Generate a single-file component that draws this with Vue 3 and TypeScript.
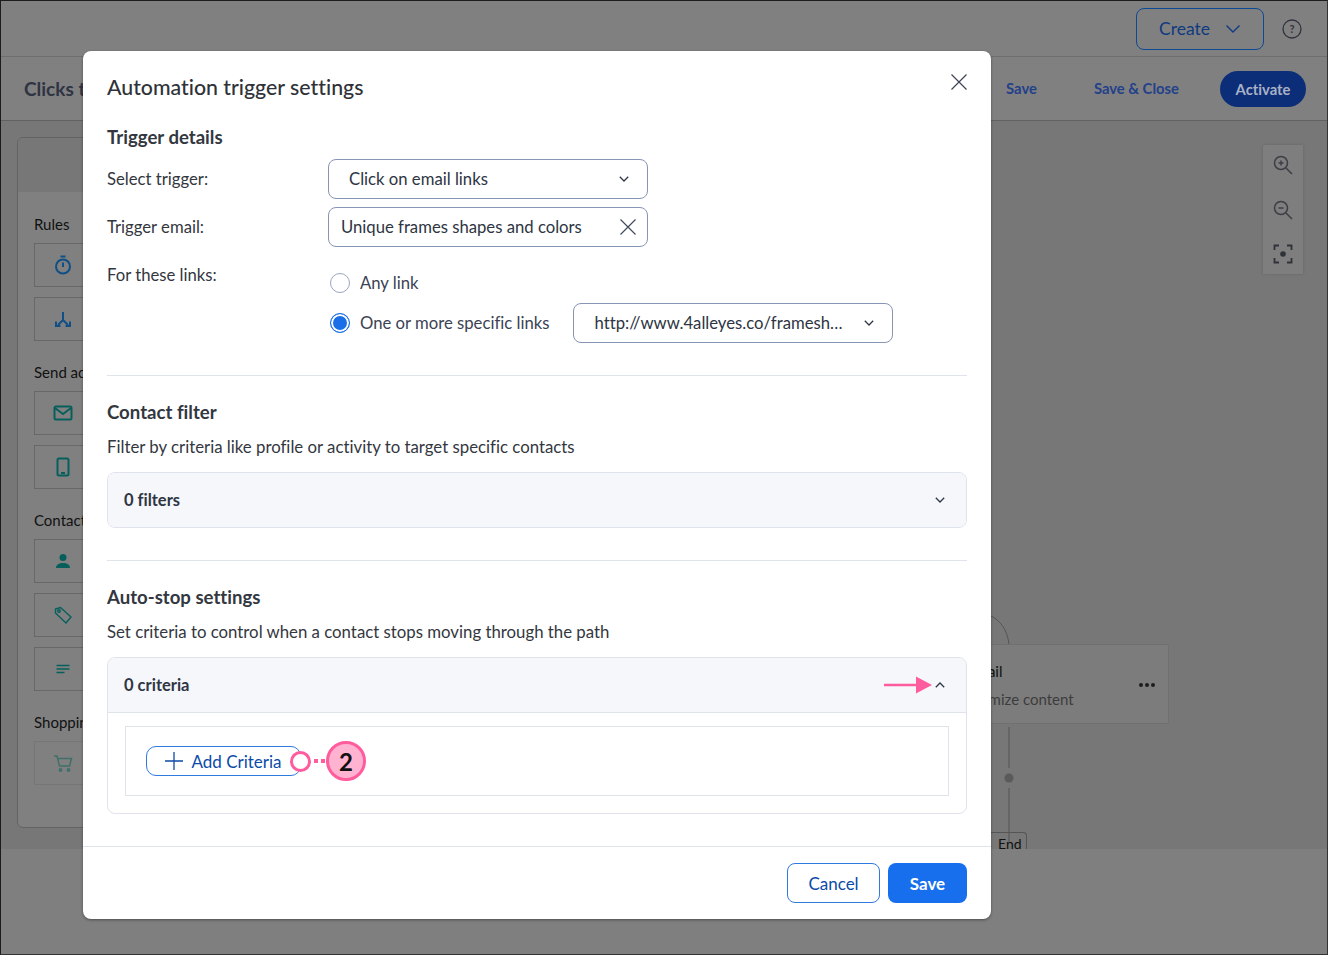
<script setup lang="ts">
interface Tile { icon: string; disabled?: boolean }
interface Group { title: string; tiles: Tile[] }
const groups: Group[] = [
  { title: 'Rules', tiles: [{ icon: 'timer' }, { icon: 'split' }] },
  { title: 'Send actions', tiles: [{ icon: 'mail' }, { icon: 'phone' }] },
  { title: 'Contact actions', tiles: [{ icon: 'person' }, { icon: 'tag' }, { icon: 'lines' }] },
  { title: 'Shopping', tiles: [{ icon: 'cart', disabled: true }] },
]
</script>

<template>
  <div class="page">
    <header class="topbar">
      <button class="create">Create
        <svg width="16" height="10" viewBox="0 0 16 10"><path d="M1.5 1.5 8 8l6.5-6.5" fill="none" stroke="currentColor" stroke-width="1.4"/></svg>
      </button>
      <svg class="help" width="20" height="20" viewBox="0 0 20 20"><circle cx="10" cy="10" r="9" fill="none" stroke="#2f333d" stroke-width="1.3"/><text x="10" y="14" text-anchor="middle" font-size="11" font-weight="700" fill="#2f333d" font-family="Lato, sans-serif">?</text></svg>
    </header>
    <div class="toolbar">
      <h1>Clicks to frames</h1>
      <div class="tool-actions">
        <span class="tool-link save-link">Save</span>
        <span class="tool-link">Save &amp; Close</span>
        <span class="activate">Activate</span>
      </div>
    </div>
    <div class="workspace">
      <aside class="sidebar">
        <div class="side-top"></div>
        <div class="side-body">
          <section v-for="g in groups" :key="g.title" class="group">
            <h3>{{ g.title }}</h3>
            <div v-for="t in g.tiles" :key="t.icon" class="tile" :class="{ off: t.disabled }">
              <svg width="24" height="24" viewBox="0 0 24 24" fill="none" stroke-width="2">
                <g v-if="t.icon === 'timer'" stroke="#0f4f86"><circle cx="12" cy="13.5" r="7"/><path d="M9.5 3.5h5M12 9.5v4.5"/></g>
                <g v-else-if="t.icon === 'split'" stroke="#0f4f86"><path d="M12 5v8M12 13l-5 5M12 13l5 5M5 14.5V19h4.500M19 14.500V19h-4.500"/></g>
                <g v-else-if="t.icon === 'mail'" stroke="#075f5c"><rect x="3.500" y="5.500" width="17" height="13" rx="1.500"/><path d="M4 7l8 6 8-6"/></g>
                <g v-else-if="t.icon === 'phone'" stroke="#075f5c"><rect x="6.500" y="3.500" width="11" height="17" rx="1.500"/><path d="M10 18h4"/></g>
                <g v-else-if="t.icon === 'person'" fill="#075f5c"><circle cx="12" cy="8.500" r="3.500"/><path d="M5 19c0-3.500 3-5 7-5s7 1.500 7 5z"/></g>
                <g v-else-if="t.icon === 'tag'" stroke="#075f5c" stroke-width="1.400"><path d="M4.500 6 9.500 4.500 20 14l-5 6L4.500 10z"/><circle cx="8" cy="8" r="1.300"/></g>
                <g v-else-if="t.icon === 'lines'" stroke="#075f5c" stroke-width="1.300"><path d="M5.500 8.500h13M5.500 12h13M5.500 15.500h8"/></g>
                <g v-else stroke="#3f6f69" stroke-width="1.500"><path d="M3 5h3l2.500 10h10L20.500 7.500H7"/><circle cx="9.500" cy="19" r="1.200"/><circle cx="17.500" cy="19" r="1.200"/></g>
              </svg>
            </div>
          </section>
        </div>
      </aside>
      <div class="zoomer">
        <svg width="20" height="20" viewBox="0 0 20 20" fill="none" stroke="#3c3f45" stroke-width="1.500"><circle cx="8" cy="8" r="6.500"/><path d="M13 13l6 6M8 5.500v5M5.500 8h5"/></svg>
        <svg width="20" height="20" viewBox="0 0 20 20" fill="none" stroke="#3c3f45" stroke-width="1.500"><circle cx="8" cy="8" r="6.500"/><path d="M13 13l6 6M5.500 8h5"/></svg>
        <svg width="20" height="20" viewBox="0 0 20 20" fill="none" stroke="#2f3238" stroke-width="1.800"><path d="M1.500 6V1.500H6M14 1.500h4.500V6M18.500 14v4.500H14M6 18.500H1.500V14"/><circle cx="10" cy="10" r="2.800" fill="#2f3238" stroke="none"/></svg>
      </div>
      <div class="node">
        <div class="node-title">Send email</div>
        <div class="node-sub">Customize content</div>
        <span class="dots"><i></i><i></i><i></i></span>
      </div>
      <svg class="wires" width="60" height="230" viewBox="0 0 60 230" fill="none" stroke="#555">
        <path d="M0 0c8 4 16 12 18 28"/><path d="M18 111v41M18 172v54"/><circle cx="18" cy="162" r="4.500" fill="#5a5a5a" stroke="none"/>
      </svg>
      <div class="end">End</div>
    </div>
    <div class="bottom-strip"></div>

    <div class="modal">
      <div class="modal-body">
        <h2 class="modal-title">Automation trigger settings</h2>
        <svg class="close" width="16" height="16" viewBox="0 0 16 16"><path d="M.5.5l15 15M15.500.5l-15 15" stroke="#3c4353" stroke-width="1.200" fill="none"/></svg>

        <h3 class="section first">Trigger details</h3>
        <div class="form-grid">
          <label>Select trigger:</label>
          <div class="select pad-wide">Click on email links
            <svg class="chev" width="10" height="6" viewBox="0 0 10 6"><path d="M.8.8 5 5 9.200.8" fill="none" stroke="#2f3747" stroke-width="1.300"/></svg>
          </div>
          <label>Trigger email:</label>
          <div class="select pad-narrow">Unique frames shapes and colors
            <svg width="18" height="18" viewBox="0 0 18 18"><path d="M1.500 1.500l15 15M16.500 1.500l-15 15" stroke="#3f4a60" stroke-width="1.200" fill="none"/></svg>
          </div>
          <label class="links-label">For these links:</label>
          <div class="radios">
            <div class="radio-row"><span class="radio"></span>Any link</div>
            <div class="radio-row second"><span class="radio on"></span><span>One or more specific links</span>
              <div class="select url">http://www.4alleyes.co/framesh…
                <svg class="chev" width="10" height="6" viewBox="0 0 10 6"><path d="M.8.8 5 5 9.200.8" fill="none" stroke="#2f3747" stroke-width="1.300"/></svg>
              </div>
            </div>
          </div>
        </div>

        <hr class="rule r1" />
        <h3 class="section">Contact filter</h3>
        <p class="desc">Filter by criteria like profile or activity to target specific contacts</p>
        <div class="accordion">
          <div class="acc-head"><strong>0 filters</strong>
            <svg class="chev" width="10" height="6" viewBox="0 0 10 6"><path d="M.8.8 5 5 9.200.8" fill="none" stroke="#2f3747" stroke-width="1.300"/></svg>
          </div>
        </div>

        <hr class="rule r2" />
        <h3 class="section">Auto-stop settings</h3>
        <p class="desc">Set criteria to control when a contact stops moving through the path</p>
        <div class="accordion">
          <div class="acc-head open"><strong>0 criteria</strong>
            <svg class="chev" width="10" height="6" viewBox="0 0 10 6"><path d="M.8 5.200 5 1l4.200 4.200" fill="none" stroke="#2f3747" stroke-width="1.300"/></svg>
          </div>
          <div class="acc-body">
            <div class="inner">
              <button class="add"><svg width="18" height="18" viewBox="0 0 18 18"><path d="M9 0v18M0 9h18" stroke="#0b4aa8" stroke-width="1.300"/></svg>Add Criteria</button>
            </div>
          </div>
        </div>
      </div>
      <footer class="modal-foot">
        <button class="btn cancel">Cancel</button>
        <button class="btn primary">Save</button>
      </footer>
    </div>

    <svg class="arrow" width="48" height="18" viewBox="0 0 48 18"><path d="M0 7.800h32v-7.300L48 9 32 17.500v-7.300H0z" fill="#ff5c9e"/></svg>
    <div class="callout">
      <span class="ring"></span>
      <span class="dot-line"><i></i><i></i></span>
      <span class="badge">2</span>
    </div>
  </div>
</template>

<style>
html, body { margin: 0; padding: 0; }
</style>

<style scoped>
* { box-sizing: border-box; }
.page {
  position: relative; width: 1328px; height: 955px; overflow: hidden;
  background: #7f7f7f; border: 1px solid #1c1c1c; border-right-color: #333; border-bottom-color: #333;
  font-family: Lato, "Noto Sans", sans-serif; color: #333a48; font-variant-ligatures: none;
}
.topbar {
  height: 56px; display: flex; align-items: center; justify-content: flex-end;
  padding: 0 25px 0 0; gap: 18px; border-bottom: 1px solid #6e6e6e; background: #808080;
}
.create {
  width: 128px; height: 42px; border: 1px solid #0d4a96; border-radius: 8px; background: transparent;
  color: #0f3a80; font: 400 17.500px Lato, sans-serif; display: flex; align-items: center; justify-content: center; gap: 15px;
}
.help { flex: none; }
.toolbar {
  height: 64px; display: flex; align-items: center; justify-content: space-between;
  padding: 0 21px 0 23px; background: #808080; border-bottom: 1px solid #616161;
}
.toolbar h1 { margin: 0; font-size: 19px; font-weight: 700; color: #2f3442; white-space: nowrap; }
.tool-actions { display: flex; align-items: center; }
.tool-link { color: #23408a; font-size: 14.800px; font-weight: 700; margin: -1px 41px 0 0; }
.save-link { margin-right: 57px; }
.activate {
  width: 86px; height: 36px; border-radius: 18px; background: #0c2d78; color: #a9b1c6;
  font-size: 14.800px; font-weight: 700; display: flex; align-items: center; justify-content: center;
}
.workspace { position: relative; height: 728px; background: #777; }
.sidebar {
  position: absolute; left: 16px; top: 16px; width: 300px; height: 691px;
  border: 1px solid #636363; border-radius: 6px; overflow: hidden; background: #808080;
}
.side-top { height: 54px; background: #777; }
.side-body { padding: 22px 16px; }
.group h3 { margin: 0 0 9px; font-size: 15px; font-weight: 400; color: #111; line-height: 20px; white-space: nowrap; }
.group { margin-bottom: 21px; }
.tile {
  width: 200px; height: 44px; border: 1px solid #686868; display: flex; align-items: center;
  padding-left: 16px; margin-bottom: 10px;
}
.tile.off { border-color: #767676; }
.zoomer {
  position: absolute; left: 1262px; top: 24px; width: 40px; height: 129px; background: #7e7e7e;
  display: flex; flex-direction: column; align-items: center; justify-content: space-between; padding: 10px 0;
  box-shadow: 0 0 3px rgba(0,0,0,.15);
}
.node {
  position: absolute; left: 900px; top: 524px; width: 267px; height: 78px; background: #7c7c7c; padding: 16px 0 0 70px;
  box-shadow: 0 0 1px rgba(0,0,0,.3);
}
.node-title { font-size: 15px; color: #111; line-height: 20px; margin-left: -40px; }
.node-sub { font-size: 15px; color: #3c3c3c; line-height: 20px; margin-top: 8px; margin-left: -21px; }
.dots { position: absolute; right: 13px; top: 38px; display: flex; gap: 2px; }
.dots i { width: 4px; height: 4px; border-radius: 50%; background: #1d1d1d; display: block; }
.wires { position: absolute; left: 990px; top: 495px; }
.end {
  position: absolute; left: 970px; top: 711px; width: 56px; height: 20px; padding-left: 26px; border: 1px solid #555; border-bottom: 0;
  border-radius: 4px 4px 0 0; font-size: 14px; line-height: 22px; color: #111;
}
.bottom-strip { position: absolute; left: 0; right: 0; top: 848px; bottom: 0; background: #7f7f7f; }

.modal {
  position: absolute; left: 82px; top: 50px; width: 908px; height: 868px; background: #fff; border-radius: 8px;
  display: flex; flex-direction: column; box-shadow: 0 1px 3px rgba(0,0,0,.4);
}
.modal-body { position: relative; flex: 1; padding: 23px 24px 0; }
.modal-title { margin: 0; font-size: 21.300px; line-height: 27px; font-weight: 500; color: #2f3238; }
.close { position: absolute; right: 24px; top: 23px; }
.section { margin: 0; font-size: 18.600px; line-height: 24px; font-weight: 700; color: #333740; }
.section.first { margin-top: 24px; }
.form-grid {
  display: grid; grid-template-columns: 221px 1fr; row-gap: 8px; margin-top: 10px; align-items: center;
}
label { font-size: 16.700px; color: #333740; }
.select {
  width: 320px; height: 40px; border: 1px solid #8694b5; border-radius: 8px; display: flex; align-items: center; justify-content: space-between;
  font-size: 16.700px; color: #2e3543; background: #fff; white-space: nowrap;
}
.links-label { align-self: start; margin-top: 10px; }
.pad-wide { padding: 0 18px 0 20px; }
.pad-narrow { padding: 0 10px 0 12px; }
.radio-row { display: flex; align-items: center; height: 40px; font-size: 16.700px; color: #3b4355; margin-top: 8px; }
.radio-row.second { margin-top: 0; }
.radio {
  width: 20px; height: 20px; border-radius: 50%; border: 1px solid #9aa5bf; margin: 0 10px 0 2px; flex: none; background: #fff;
}
.radio.on { border: 1px solid #1a6fe8; background: #1a6fe8; box-shadow: inset 0 0 0 2px #fff; }
.url { margin-left: 24px; padding: 0 18px 0 20px; }
.rule { border: 0; border-top: 1px solid #dfe3ec; margin: 0; }
.r1 { margin-top: 32px; }
.r2 { margin-top: 32px; }
.rule + .section { margin-top: 24px; }
.desc { margin: 11px 0 0; font-size: 16.800px; line-height: 24px; color: #333740; height: 24px; }
.accordion { margin-top: 13px; border: 1px solid #dfe3ec; border-radius: 8px; overflow: hidden; }
.acc-head {
  height: 54px; background: #f6f7fb; display: flex; align-items: center; justify-content: space-between; padding: 0 21px 0 16px;
  font-size: 16.500px; color: #2e3543;
}
.acc-head.open { height: 55px; border-bottom: 1px solid #dfe3ec; }
.acc-body { padding: 13px 17px 17px; }
.inner { height: 70px; border: 1px solid #dfe3ec; padding: 19px 20px; }
.add {
  width: 155px; height: 30px; border: 1px solid #2f7ae0; border-radius: 10px; background: #fff; color: #0b4aa8;
  font: 400 17px Lato, sans-serif; display: flex; align-items: center; justify-content: center; gap: 8px; padding: 0;
}
.modal-foot {
  height: 73px; border-top: 1px solid #dfe3ec; display: flex; justify-content: flex-end; align-items: center; gap: 8px; padding: 0 24px;
}
.btn { height: 40px; border-radius: 8px; font: 400 17px Lato, sans-serif; cursor: pointer; }
.cancel { width: 93px; background: #fff; border: 1px solid #2f7ae0; color: #0b4aa8; }
.primary { width: 79px; background: #176fed; border: 0; color: #fff; font-weight: 700; }
.create, .add, .btn { font-variant-ligatures: none; }

.arrow { position: absolute; left: 883px; top: 675px; }
.callout { position: absolute; left: 289px; top: 740px; display: flex; align-items: center; height: 40px; }
.ring { width: 21px; height: 21px; border: 3px solid #ff5c9e; border-radius: 50%; background: #fff; }
.dot-line { display: flex; gap: 3px; margin: 0 1px 0 3px; }
.dot-line i { width: 4px; height: 4px; background: #ff5c9e; display: block; }
.badge {
  width: 40px; height: 40px; border-radius: 50%; border: 3px solid #ff5c9e; background: #ffb3d1; color: #111;
  display: flex; align-items: center; justify-content: center; font-size: 24px; font-weight: 700;
}
</style>
